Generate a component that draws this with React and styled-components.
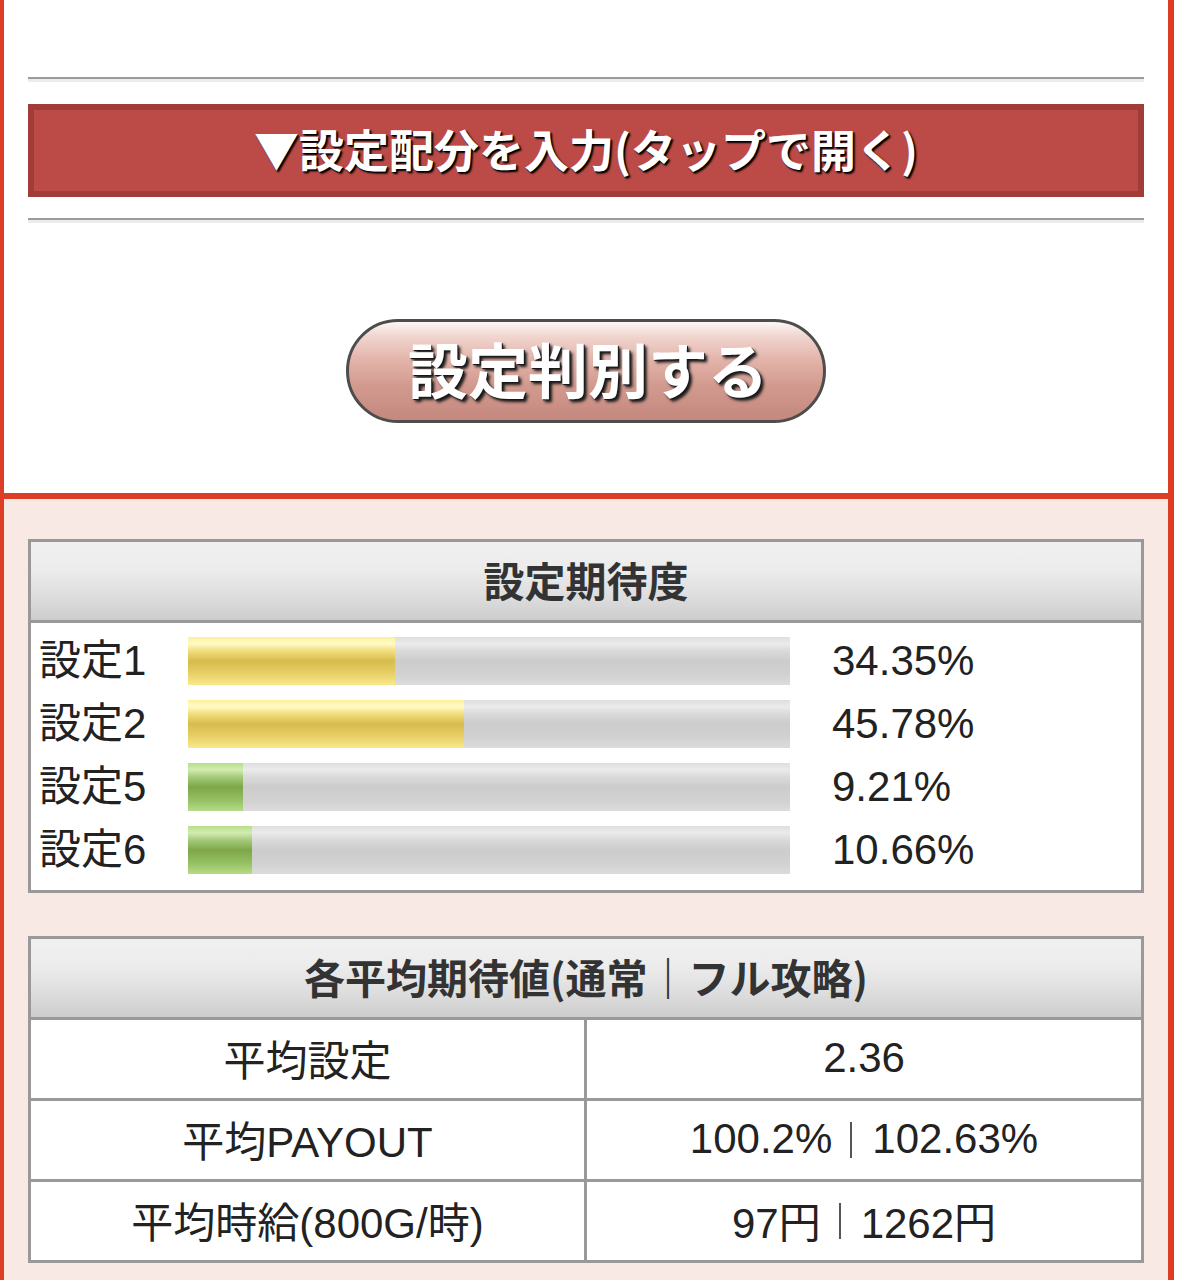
import React from 'react'
import styled, { createGlobalStyle } from 'styled-components'

// Global
const GlobalStyle = createGlobalStyle`
  html, body {
    margin: 0;
    padding: 0;
    background: #ffffff;
  }
  body {
    font-family: "Liberation Sans", "Noto Sans CJK JP", sans-serif;
    color: #222222;
  }
`

// Styles
const Frame = styled.div`
  width: 1164px;
  border-left: 4px solid #dc3d24;
  border-right: 6px solid #dc3d24;
  min-height: 1280px;
  background: #f8e9e5;
`

const InputSection = styled.section`
  background: #ffffff;
  border-bottom: 6px solid #dc3d24;
  padding: 77px 24px 70px;
`

const Rule = styled.div`
  height: 0;
  border-top: 2px solid #9b9b9b;
  border-bottom: 3px solid #ececec;
`

const ToggleBar = styled.div`
  margin: 22px 0 21px;
  border: 6px solid #a23c39;
  background: #bc4b47;
  display: flex;
  align-items: center;
  justify-content: center;
  color: #ffffff;
  font-family: "Noto Sans CJK JP", sans-serif;
  font-weight: 700;
  font-size: 45px;
  padding-bottom: 4px;
  height: 77px;
  text-shadow: 2px 2px 2px #000000, 1px 1px 1px #000000;
`

const JudgeRow = styled.div`
  display: flex;
  justify-content: center;
  padding-top: 96px;
`

const JudgeButton = styled.button`
  width: 480px;
  height: 104px;
  border-radius: 52px;
  border: 3px solid #4d4d4d;
  background: linear-gradient(
    to bottom,
    #fdf6f4 0%,
    #f1d6d0 14%,
    #e2b2a8 40%,
    #d29a8f 65%,
    #c4887d 100%
  );
  color: #ffffff;
  font-family: "Noto Sans CJK JP", sans-serif;
  font-weight: 700;
  font-size: 60px;
  line-height: 1;
  padding: 0 0 6px 4px;
  text-shadow: 3px 3px 3px #1a1a1a, 1px 1px 1px #000000;
  cursor: pointer;
`

const ResultSection = styled.section`
  padding: 40px 24px 15px;
  display: flex;
  flex-direction: column;
  gap: 43px;
`

const Panel = styled.div`
  border: 3px solid #999999;
  background: #ffffff;
`

const PanelHeader = styled.div`
  height: 74px;
  padding-bottom: 4px;
  border-bottom: 3px solid #999999;
  background: linear-gradient(to bottom, #f0f0f0 0%, #ececec 35%, #dddddd 70%, #cdcdcd 100%);
  display: flex;
  align-items: center;
  justify-content: center;
  font-family: "Noto Sans CJK JP", sans-serif;
  font-weight: 700;
  font-size: 41px;
  color: #333333;
`

const BarList = styled.div`
  display: grid;
  grid-template-columns: 157px 602px 1fr;
  row-gap: 15px;
  padding: 14px 0 16px;
  align-items: center;
`

const BarLabel = styled.div`
  padding-left: 8px;
  font-size: 42px;
  line-height: 48px;
  color: #222222;
`

const BarTrack = styled.div`
  height: 48px;
  background: linear-gradient(
    to bottom,
    #dedede 0%,
    #ebebeb 14%,
    #d9d9d9 30%,
    #cccccc 50%,
    #d2d2d2 80%,
    #dcdcdc 100%
  );
  display: flex;
`

const BarFill = styled.div`
  height: 100%;
  background: ${props => props.tone === 'green'
    ? 'linear-gradient(to bottom, #b7de8a 0%, #d3ebb0 14%, #a3c979 30%, #7fa748 50%, #93bd61 75%, #b5dc86 100%)'
    : 'linear-gradient(to bottom, #fdf09a 0%, #fffbc6 14%, #f0dc7a 30%, #d8bb4d 50%, #e6cf66 75%, #f9e98a 100%)'};
`

const BarValue = styled.div`
  padding-left: 42px;
  font-size: 42px;
  line-height: 48px;
  color: #222222;
`

const StatRow = styled.div`
  display: grid;
  grid-template-columns: 553px 1fr;
  height: 78px;
  & + & {
    border-top: 3px solid #999999;
  }
`

const StatCell = styled.div`
  display: flex;
  align-items: center;
  justify-content: center;
  font-size: 42px;
  color: #222222;
  padding-bottom: 3px;
  & + & {
    border-left: 3px solid #999999;
  }
`

const Sep = styled.span`
  display: inline-block;
  width: 2px;
  height: 36px;
  background: #555555;
  margin: 0 20px 0 18px;
  position: relative;
  top: 1px;
`

const bars = [
  { label: '設定1', value: 34.35, tone: 'yellow' },
  { label: '設定2', value: 45.78, tone: 'yellow' },
  { label: '設定5', value: 9.21, tone: 'green' },
  { label: '設定6', value: 10.66, tone: 'green' },
]

// Component
export default function App() {
  return (
    <>
      <GlobalStyle />
      <Frame>
        <InputSection>
          <Rule />
          <ToggleBar>▼設定配分を入力(タップで開く)</ToggleBar>
          <Rule />
          <JudgeRow>
            <JudgeButton>設定判別する</JudgeButton>
          </JudgeRow>
        </InputSection>

        <ResultSection>
          <Panel>
            <PanelHeader>設定期待度</PanelHeader>
            <BarList>
              {bars.map(bar => (
                <React.Fragment key={bar.label}>
                  <BarLabel>{bar.label}</BarLabel>
                  <BarTrack>
                    <BarFill tone={bar.tone} style={{ width: `${bar.value}%` }} />
                  </BarTrack>
                  <BarValue>{bar.value.toFixed(2)}%</BarValue>
                </React.Fragment>
              ))}
            </BarList>
          </Panel>

          <Panel>
            <PanelHeader>各平均期待値(通常｜フル攻略)</PanelHeader>
            <StatRow>
              <StatCell>平均設定</StatCell>
              <StatCell>2.36</StatCell>
            </StatRow>
            <StatRow>
              <StatCell>平均PAYOUT</StatCell>
              <StatCell>100.2%<Sep />102.63%</StatCell>
            </StatRow>
            <StatRow>
              <StatCell>平均時給(800G/時)</StatCell>
              <StatCell>97円<Sep />1262円</StatCell>
            </StatRow>
          </Panel>
        </ResultSection>
      </Frame>
    </>
  )
}
